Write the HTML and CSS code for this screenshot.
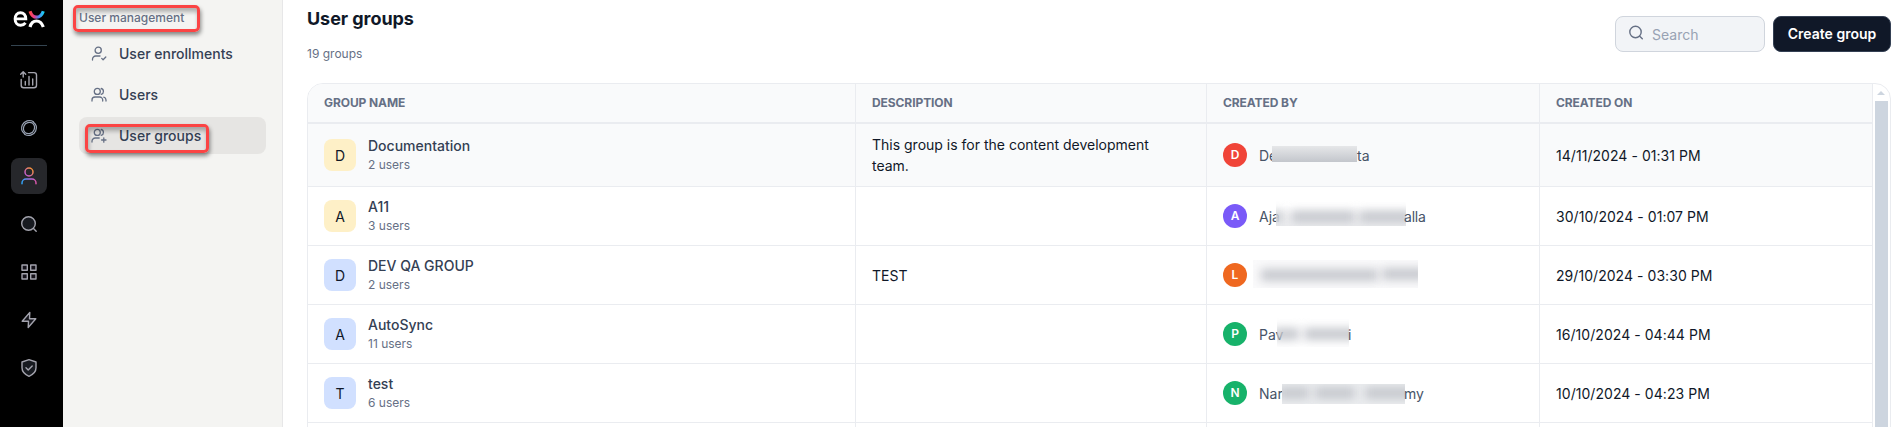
FILE: index.html
```html
<!DOCTYPE html>
<html lang="en">
<head>
<meta charset="utf-8">
<title>User groups</title>
<link rel="stylesheet" href="styles.css">
</head>
<body>
<div class="app">
  <nav class="rail">
    <svg class="logo" width="32" height="18" viewBox="0 0 32 18" fill="none" stroke="#fff" stroke-width="3.2">
      <defs><linearGradient id="lg" x1="16" y1="0" x2="31" y2="0" gradientUnits="userSpaceOnUse"><stop offset="0" stop-color="#ff4a3d"/><stop offset=".35" stop-color="#e93c8c"/><stop offset=".62" stop-color="#5a7cf0"/><stop offset="1" stop-color="#12d8f5"/></linearGradient></defs>
      <path d="M2.4 8.9h10.4c0-4-2.3-6.2-5.3-6.2-3.2 0-5.4 2.6-5.4 6.2 0 3.8 2.3 6.3 5.6 6.3 2 0 3.6-.8 4.8-2.4" stroke-width="2.9"/>
      <path d="M17 1.2c1.2 3.5 3.2 6 6.5 6s5.5-2.5 6.8-6" stroke="url(#lg)"/>
      <path d="M17 17c1-3.700 3.200-6 6.500-6s5.500 2.300 6.800 6"/>
    </svg>
    <div class="rail-line"></div>
    <a class="rail-item"><svg width="20" height="20" viewBox="0 0 20 20"><path d="M9.500 2.600H15a2.500 2.500 0 0 1 2.500 2.500v10.200a2.500 2.500 0 0 1-2.500 2.500H4.700a2.500 2.500 0 0 1-2.500-2.500V9.500"/><path d="M4.200 7V2M1.700 4.200 4.200 1.700l2.500 2.500M6.300 15v-3.500M10 15V6.500M13.700 15V9"/></svg></a>
    <a class="rail-item"><svg width="20" height="20" viewBox="0 0 20 20" class="swirl"><path d="M14.500 3.800C10.500 1.200 5.200 2.700 3.300 7c-1.400 3.300-.4 6.700 2.200 8.700M5.500 16.200c4 2.600 9.300 1.100 11.200-3.200 1.400-3.300.4-6.700-2.200-8.700"/><path d="M13.800 5.300C10.700 3.500 6.500 4.500 5 8c-1.100 2.600-.4 5 1.300 6.600M6.200 14.700c3.100 1.800 7.300.8 8.800-2.700 1.100-2.600.4-5-1.300-6.600"/></svg></a>
    <a class="rail-item active"><svg width="20" height="20" viewBox="0 0 20 20"><defs><linearGradient id="ug" x1="2" y1="15" x2="15" y2="3" gradientUnits="userSpaceOnUse"><stop offset="0" stop-color="#20b8f8"/><stop offset=".45" stop-color="#c65cd0"/><stop offset="1" stop-color="#ff9b20"/></linearGradient><linearGradient id="ub" x1="2" y1="0" x2="18" y2="0" gradientUnits="userSpaceOnUse"><stop offset="0" stop-color="#20a8f8"/><stop offset=".6" stop-color="#b36be0"/><stop offset="1" stop-color="#e052a0"/></linearGradient></defs><circle cx="10" cy="6" r="4" stroke="url(#ug)"/><path d="M3 17.700v-.7a4 4 0 0 1 4-4h6a4 4 0 0 1 4 4v.7" stroke="url(#ub)"/></svg></a>
    <a class="rail-item"><svg width="20" height="20" viewBox="0 0 20 20"><circle cx="9.500" cy="9.500" r="6.800" fill="#171a20"/><path d="m14.500 14.500 2.700 2.700"/></svg></a>
    <a class="rail-item"><svg width="20" height="20" viewBox="0 0 20 20"><path d="M3 3h5.300v5.300H3zM11.700 3H17v5.300h-5.300zM3 11.700h5.300V17H3zM11.700 11.700H17V17h-5.300z" fill="#15121a"/></svg></a>
    <a class="rail-item"><svg width="20" height="20" viewBox="0 0 20 20"><path d="M10.800 2.500 3.200 11.200h6.300l-.3 6.300 7.600-8.700h-6.300z" fill="#15151b"/></svg></a>
    <a class="rail-item"><svg width="20" height="20" viewBox="0 0 20 20"><path d="M10 1.700 17 4v5.800c0 4.300-3.200 6.900-7 8.500-3.800-1.600-7-4.200-7-8.500V4z" fill="#171a20"/><path d="m7 9.800 2.200 2.100 4-4"/></svg></a>
  </nav>

  <aside class="sidebar">
    <div class="side-title">User management<span class="mark mark-title"></span></div>
    <a class="side-item"><svg width="16" height="16" viewBox="0 0 16 16"><circle cx="7.200" cy="4.300" r="3.100"/><path d="M1.500 14v-.8A3.200 3.200 0 0 1 4.700 10H9M10.700 12.400l1.400 1.400 2.700-2.800"/></svg>User enrollments</a>
    <a class="side-item"><svg width="16" height="16" viewBox="0 0 16 16"><circle cx="6.300" cy="4.400" r="3"/><path d="M1 14v-1a3 3 0 0 1 3-3h4.700a3 3 0 0 1 3 3v1M10.200 1.500a3 3 0 0 1 0 5.800M12.800 10.100a3 3 0 0 1 2.200 2.900v1"/></svg>Users</a>
    <a class="side-item selected"><svg width="16" height="16" viewBox="0 0 16 16"><circle cx="6.300" cy="4.400" r="3"/><path d="M1 14v-.8A3.200 3.200 0 0 1 4.200 10h4M10.200 1.500a3 3 0 0 1 0 5.800M10.600 12h4.400M12.800 9.800v4.400"/></svg>User groups<span class="mark mark-item"></span></a>
  </aside>

  <main class="main">
    <header class="head">
      <div>
        <h1>User groups</h1>
        <p class="count">19 groups</p>
      </div>
      <div class="actions">
        <label class="search"><svg width="16" height="16" viewBox="0 0 16 16"><circle cx="7.500" cy="7" r="5.700"/><path d="m11.700 11.200 2.600 2.500"/></svg><span>Search</span></label>
        <button class="create">Create group</button>
      </div>
    </header>

    <section class="table">
      <div class="rows">
        <div class="row header"><div>GROUP NAME</div><div>DESCRIPTION</div><div>CREATED BY</div><div>CREATED ON</div></div>
        <div class="row tall">
          <div class="group"><span class="tile yellow">D</span><span class="names"><b>Documentation</b><small>2 users</small></span></div>
          <div class="desc">This group is for the content development team.</div>
          <div class="by"><i class="dot red">D</i><span class="person">De<span class="smudge s1"></span><span class="end">ta</span></span></div>
          <div class="date">14/11/2024 - 01:31 PM</div>
        </div>
        <div class="row">
          <div class="group"><span class="tile yellow">A</span><span class="names"><b>A11</b><small>3 users</small></span></div>
          <div></div>
          <div class="by"><i class="dot violet">A</i><span class="person">Aja<span class="smudge s2"><em></em><em></em><em></em></span><span class="end">alla</span></span></div>
          <div class="date">30/10/2024 - 01:07 PM</div>
        </div>
        <div class="row">
          <div class="group"><span class="tile blue">D</span><span class="names"><b>DEV QA GROUP</b><small>2 users</small></span></div>
          <div class="desc">TEST</div>
          <div class="by"><i class="dot orange">L</i><span class="person"><span class="smudge s3"><em></em><em></em></span></span></div>
          <div class="date">29/10/2024 - 03:30 PM</div>
        </div>
        <div class="row">
          <div class="group"><span class="tile blue">A</span><span class="names"><b>AutoSync</b><small>11 users</small></span></div>
          <div></div>
          <div class="by"><i class="dot green">P</i><span class="person">Pav<span class="smudge s4"><em></em><em></em></span><span class="end">i</span></span></div>
          <div class="date">16/10/2024 - 04:44 PM</div>
        </div>
        <div class="row">
          <div class="group"><span class="tile blue">T</span><span class="names"><b>test</b><small>6 users</small></span></div>
          <div></div>
          <div class="by"><i class="dot green">N</i><span class="person">Nar<span class="smudge s5"><em></em><em></em><em></em></span><span class="end">my</span></span></div>
          <div class="date">10/10/2024 - 04:23 PM</div>
        </div>
        <div class="row"><div></div><div></div><div></div><div></div></div>
      </div>
      <div class="scrollbar"><span class="arrow"></span><span class="thumb"></span></div>
    </section>
  </main>
</div>
</body>
</html>
```
FILE: styles.css
```css
* { box-sizing: border-box; }
body { margin: 0; font-family: Inter, "Liberation Sans", sans-serif; font-size: 14px; color: #101828; background: #fff; }
.app { display: flex; width: 1902px; height: 427px; overflow: hidden; }

.rail { width: 63px; background: #000; padding: 10px 0 0 11px; flex: none; }
.logo { display: block; margin-left: 2px; }
.rail-line { width: 36px; height: 1px; margin: 17px 0 16px; background: #344450; }
.rail-item { display: flex; align-items: center; justify-content: center; width: 36px; height: 36px; margin-bottom: 12px; border-radius: 8px; }
.rail-item.active { background: #26272b; }
.rail-item svg { fill: none; stroke: #a3a3ad; stroke-width: 1.4; stroke-linecap: round; stroke-linejoin: round; }
.rail-item .swirl { stroke: #98a2b3; stroke-width: 1.2; }
.rail-item.active svg { stroke-width: 1.5; }

.sidebar { width: 220px; flex: none; background: #f4f4f2; border-right: 1px solid #e7e7e8; padding: 9px 16px 0; }
.side-title { position: relative; height: 18px; line-height: 18px; margin-bottom: 8px; font-size: 12px; font-weight: 500; color: #667085; }
.side-item { position: relative; display: flex; align-items: center; gap: 12px; width: 187px; height: 37px; margin-bottom: 4px; padding-left: 12px; border-radius: 8px; font-size: 14px; font-weight: 500; color: #344054; }
.side-item.selected { background: #e6e5e3; }
.side-item svg { fill: none; stroke: #667085; stroke-width: 1.3; stroke-linecap: round; stroke-linejoin: round; }
.mark { position: absolute; border: 3px solid #fb4444; border-radius: 5px; box-shadow: 1px 3px 4px rgba(0,0,0,.45), inset 1px 4px 4px rgba(0,0,0,.28); }
.mark-title { left: -6px; top: -4px; width: 127px; height: 27px; }
.mark-item { left: 6px; top: 7px; width: 124px; height: 29px; }

.main { flex: 1; padding: 0 11px 0 24px; }
.head { display: flex; justify-content: space-between; height: 83px; }
h1 { margin: 5px 0 0; font-size: 18px; line-height: 28px; font-weight: 700; letter-spacing: -.06px; }
.count { margin: 12px 0 0; font-size: 12px; line-height: 18px; color: #667085; }
.actions { display: flex; gap: 8px; padding-top: 16px; height: 52px; }
.search { display: flex; align-items: center; gap: 8px; width: 150px; border: 1px solid #d0d5dd; border-radius: 8px; padding-left: 12px; background: #f2f4f7; color: #98a2b3; }
.search svg { fill: none; stroke: #667085; stroke-width: 1.4; stroke-linecap: round; margin-top: -3px; }
.search span { padding-top: 1px; }
.create { width: 118px; padding: 0 0 1px; border: 1px solid #344054; border-radius: 8px; background: #101828; color: #fff; font: 600 14px Inter, sans-serif; }

.table { display: flex; width: 1584px; height: 360px; border: 1px solid #eaecf0; border-radius: 16px 16px 0 0; overflow: hidden; }
.rows { width: 1565px; flex: none; }
.row { display: grid; grid-template-columns: 548px 351px 333px 333px; height: 59px; border-bottom: 1px solid #eaecf0; }
.row > div { display: flex; align-items: center; padding: 0 16px; border-right: 1px solid #eaecf0; line-height: 21px; }
.row.header { height: 40px; border-bottom-width: 2px; background: #f9fafb; font-size: 12px; font-weight: 700; letter-spacing: -.08px; color: #667085; }
.row.header > div { padding-bottom: 1px; }
.row.tall { height: 63px; background: #f9fafb; }
.row > .desc { padding-right: 40px; }
.row > .date { padding-top: 1px; letter-spacing: .05px; }
.tile { width: 32px; height: 32px; margin-right: 12px; border-radius: 8px; line-height: 34px; text-align: center; flex: none; }
.yellow { background: #fef0c7; }
.blue { background: #d1e0ff; }
.names b { display: block; font-weight: 500; line-height: 20px; color: #344054; }
.names small { display: block; font-size: 12px; line-height: 18px; color: #667085; }
.dot { width: 24px; height: 24px; margin-right: 12px; border-radius: 50%; color: #fff; font-size: 12px; line-height: 24px; font-weight: 600; font-style: normal; text-align: center; flex: none; }
.red { background: #f04438; }
.violet { background: #7a5af8; }
.orange { background: #ef6820; }
.green { background: #17b26a; }
.person { position: relative; display: flex; width: 200px; height: 19px; line-height: 20px; color: #475467; }
.end { position: absolute; top: 0; }
.smudge { position: absolute; overflow: hidden; }
.smudge em { position: absolute; height: 12px; background: #c6c8ce; filter: blur(5px); }
.s1 { left: 13px; top: 0; width: 85px; height: 16px; background: linear-gradient(#e6e7e9, #c3c6cc); }
.s1 + .end { left: 98px; }
.s2 { left: 17px; top: -7px; width: 130px; height: 26px; background: linear-gradient(rgba(238,239,241,0) 20%, #eeeff1); }
.s2 em { top: 11px; }
.s2 em:nth-child(1) { left: -5px; width: 12px; }
.s2 em:nth-child(2) { left: 15px; width: 64px; }
.s2 em:nth-child(3) { left: 83px; width: 53px; }
.s2 + .end { left: 145px; letter-spacing: -.2px; }
.s3 { left: -6px; top: -6px; width: 165px; height: 28px; background: #fafafb; }
.s3 em:nth-child(1) { left: 8px; width: 117px; top: 9px; }
.s3 em:nth-child(2) { left: 129px; width: 44px; top: 8px; }
.s4 { left: 18px; top: -7px; width: 72px; height: 29px; }
.s4 em { top: 10px; }
.s4 em:nth-child(1) { left: -4px; width: 26px; }
.s4 em:nth-child(2) { left: 27px; width: 54px; }
.s4 + .end { left: 89px; }
.s5 { left: 23px; top: 0; width: 123px; height: 20px; background: #eceef0; }
.s5 em { top: 3px; }
.s5 em:nth-child(1) { left: -4px; width: 31px; }
.s5 em:nth-child(2) { left: 33px; width: 40px; }
.s5 em:nth-child(3) { left: 83px; width: 48px; }
.s5 + .end { left: 145px; }

.scrollbar { display: flex; flex-direction: column; align-items: center; width: 17px; padding: 7px 1px 0 0; }
.arrow { width: 0; height: 0; border: 4px solid transparent; border-top: 0; border-bottom-color: #cdd5df; }
.thumb { width: 13px; flex: 1; margin-top: 6px; background: #cdd5df; }
```
